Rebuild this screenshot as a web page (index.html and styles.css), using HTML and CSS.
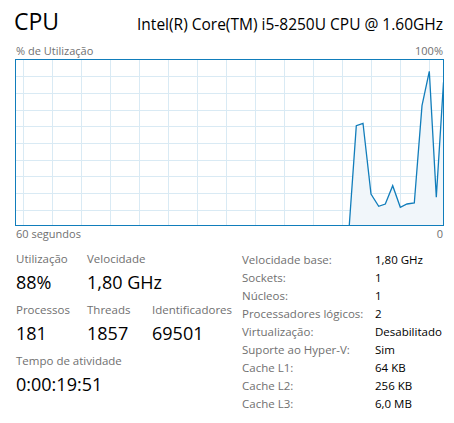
FILE: index.html
```html
<!DOCTYPE html>
<html lang="pt-BR">
<head>
<meta charset="utf-8">
<title>CPU</title>
<link rel="stylesheet" href="styles.css">
</head>
<body>
<div class="page">
  <div class="header">
    <div class="title">CPU</div>
    <div class="model">Intel(R) Core(TM) i5-8250U CPU @ 1.60GHz</div>
  </div>
  <div class="axis-row top">
    <span>% de Utilização</span>
    <span>100%</span>
  </div>
  <svg class="graph" width="429" height="167" viewBox="0 0 429 167">
    <g class="grid">
      <line x1="8.5" y1="0" x2="8.5" y2="167"/>
      <line x1="37.5" y1="0" x2="37.5" y2="167"/>
      <line x1="66.5" y1="0" x2="66.5" y2="167"/>
      <line x1="95.5" y1="0" x2="95.5" y2="167"/>
      <line x1="124.5" y1="0" x2="124.5" y2="167"/>
      <line x1="153.5" y1="0" x2="153.5" y2="167"/>
      <line x1="182.5" y1="0" x2="182.5" y2="167"/>
      <line x1="211.5" y1="0" x2="211.5" y2="167"/>
      <line x1="240.5" y1="0" x2="240.5" y2="167"/>
      <line x1="269.5" y1="0" x2="269.5" y2="167"/>
      <line x1="298.5" y1="0" x2="298.5" y2="167"/>
      <line x1="327.5" y1="0" x2="327.5" y2="167"/>
      <line x1="356.5" y1="0" x2="356.5" y2="167"/>
      <line x1="385.5" y1="0" x2="385.5" y2="167"/>
      <line x1="414.5" y1="0" x2="414.5" y2="167"/>
      <line x1="0" y1="17.5" x2="429" y2="17.5"/>
      <line x1="0" y1="34.5" x2="429" y2="34.5"/>
      <line x1="0" y1="51.5" x2="429" y2="51.5"/>
      <line x1="0" y1="67.5" x2="429" y2="67.5"/>
      <line x1="0" y1="84.5" x2="429" y2="84.5"/>
      <line x1="0" y1="101.5" x2="429" y2="101.5"/>
      <line x1="0" y1="117.5" x2="429" y2="117.5"/>
      <line x1="0" y1="134.5" x2="429" y2="134.5"/>
      <line x1="0" y1="151.5" x2="429" y2="151.5"/>
    </g>
    <polygon class="area" points="334.3,166 341.3,66.7 348,64.3 356,135 363.7,147.3 370.3,145 377.7,126.7 385.3,148.3 392,145 399.3,144 407,46.7 414.3,12.3 421.3,138.3 428.5,23.3 428.5,166"/>
    <polyline class="line" points="334.3,166 341.3,66.7 348,64.3 356,135 363.7,147.3 370.3,145 377.7,126.7 385.3,148.3 392,145 399.3,144 407,46.7 414.3,12.3 421.3,138.3 428.5,23.3"/>
    <rect class="frame" x="0.5" y="0.5" width="428" height="166"/>
  </svg>
  <div class="axis-row bottom">
    <span>60 segundos</span>
    <span>0</span>
  </div>
  <div class="details">
    <div class="stats">
      <div class="stat">
        <div class="label">Utilização</div>
        <div class="value">88%</div>
      </div>
      <div class="stat">
        <div class="label">Velocidade</div>
        <div class="value">1,80 GHz</div>
      </div>
      <div class="stat"></div>
      <div class="stat">
        <div class="label">Processos</div>
        <div class="value">181</div>
      </div>
      <div class="stat">
        <div class="label">Threads</div>
        <div class="value">1857</div>
      </div>
      <div class="stat">
        <div class="label">Identificadores</div>
        <div class="value">69501</div>
      </div>
      <div class="stat wide">
        <div class="label">Tempo de atividade</div>
        <div class="value">0:00:19:51</div>
      </div>
    </div>
    <dl class="props">
      <dt>Velocidade base:</dt><dd>1,80 GHz</dd>
      <dt>Sockets:</dt><dd>1</dd>
      <dt>Núcleos:</dt><dd>1</dd>
      <dt>Processadores lógicos:</dt><dd>2</dd>
      <dt>Virtualização:</dt><dd>Desabilitado</dd>
      <dt>Suporte ao Hyper-V:</dt><dd>Sim</dd>
      <dt>Cache L1:</dt><dd>64 KB</dd>
      <dt>Cache L2:</dt><dd>256 KB</dd>
      <dt>Cache L3:</dt><dd>6,0 MB</dd>
    </dl>
  </div>
</div>
</body>
</html>
```

FILE: styles.css
```css
* { box-sizing: border-box; }
html, body {
  margin: 0;
  background: #ffffff;
}
body {
  font-family: "Open Sans", "Noto Sans", sans-serif;
  color: #000;
}
.page {
  width: 454px;
  padding: 0 10px 0 15px;
}
.header {
  display: flex;
  justify-content: space-between;
  align-items: baseline;
  height: 43px;
  padding-top: 6px;
}
.title {
  font-size: 23px;
  line-height: 30px;
  font-weight: 400;
  margin-left: -1px;
}
.model {
  font-size: 15.5px;
  line-height: 30px;
  margin-right: 1px;
}
.axis-row {
  display: flex;
  justify-content: space-between;
  font-size: 11px;
  line-height: 16px;
  color: #707070;
  padding: 0 1px;
  width: 429px;
}
.graph {
  display: block;
}
.grid line {
  stroke: #d9eaf4;
  stroke-width: 1;
}
.area {
  fill: #f1f6fa;
}
.line {
  fill: none;
  stroke: #117dbb;
  stroke-width: 1.3;
  stroke-linejoin: miter;
}
.frame {
  fill: none;
  stroke: #117dbb;
  stroke-width: 1;
}
.details {
  display: flex;
  align-items: flex-start;
  margin-top: 9px;
}
.stats {
  display: grid;
  grid-template-columns: 71px 65px 84px;
  align-content: start;
  row-gap: 5px;
  width: 227px;
  padding-left: 1px;
}
.stat.wide {
  grid-column: 1 / 4;
}
.label {
  font-size: 11.5px;
  line-height: 16px;
  color: #707070;
  white-space: nowrap;
}
.value {
  font-size: 18px;
  line-height: 30px;
  white-space: nowrap;
}
.props {
  display: grid;
  grid-template-columns: 133px auto;
  margin: 0;
  font-size: 11.5px;
  line-height: 18px;
}
.props dt {
  color: #707070;
  white-space: nowrap;
}
.props dd {
  margin: 0;
  color: #000;
  white-space: nowrap;
}
```
